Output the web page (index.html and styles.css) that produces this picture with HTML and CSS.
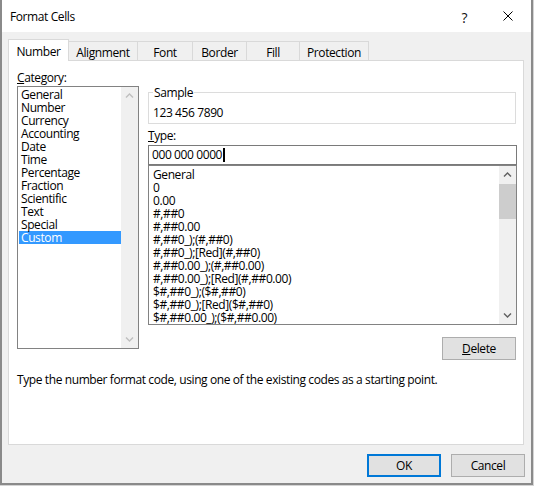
FILE: index.html
```html
<!DOCTYPE html>
<html lang="en">
<head>
<meta charset="utf-8">
<title>Format Cells</title>
<link rel="stylesheet" href="styles.css">
</head>
<body>
<div class="window">
  <div class="titlebar">
    <span class="title">Format Cells</span>
    <span class="ctrl help">?</span>
    <span class="ctrl close">
      <svg width="10" height="10" viewBox="0 0 10 10"><path d="M0.5 0.5 L9.5 9.5 M9.5 0.5 L0.5 9.5" stroke="#000" stroke-width="1" fill="none"/></svg>
    </span>
  </div>
  <div class="body">
    <div class="tabs">
      <div class="tab active w-number">Number</div>
      <div class="tab w-align">Alignment</div>
      <div class="tab w-font">Font</div>
      <div class="tab w-border">Border</div>
      <div class="tab w-fill">Fill</div>
      <div class="tab w-prot">Protection</div>
    </div>
    <div class="panel">
      <div class="cols">
        <div class="left">
          <div class="label"><u>C</u>ategory:</div>
          <div class="listbox cat">
            <ul class="items">
              <li>General</li>
              <li>Number</li>
              <li>Currency</li>
              <li>Accounting</li>
              <li>Date</li>
              <li>Time</li>
              <li>Percentage</li>
              <li>Fraction</li>
              <li>Scientific</li>
              <li>Text</li>
              <li>Special</li>
              <li class="sel">Custom</li>
            </ul>
            <div class="vscroll disabled">
              <div class="arrow"><svg width="9" height="5" viewBox="0 0 9 5"><polyline points="1,4.5 4.5,1 8,4.5" /></svg></div>
              <div class="track"></div>
              <div class="arrow"><svg width="9" height="5" viewBox="0 0 9 5"><polyline points="1,0.5 4.5,4 8,0.5" /></svg></div>
            </div>
          </div>
        </div>
        <div class="right">
          <fieldset class="sample">
            <legend>Sample</legend>
            <div class="sample-val">123 456 7890</div>
          </fieldset>
          <div class="label type-label"><u>T</u>ype:</div>
          <div class="typebox"><span>000 000 0000</span><span class="caret"></span></div>
          <div class="listbox codes">
            <ul class="items">
              <li>General</li>
              <li>0</li>
              <li>0.00</li>
              <li>#,##0</li>
              <li>#,##0.00</li>
              <li>#,##0_);(#,##0)</li>
              <li>#,##0_);[Red](#,##0)</li>
              <li>#,##0.00_);(#,##0.00)</li>
              <li>#,##0.00_);[Red](#,##0.00)</li>
              <li>$#,##0_);($#,##0)</li>
              <li>$#,##0_);[Red]($#,##0)</li>
              <li>$#,##0.00_);($#,##0.00)</li>
            </ul>
            <div class="vscroll">
              <div class="arrow"><svg width="9" height="5" viewBox="0 0 9 5"><polyline points="1,4.5 4.5,1 8,4.5" /></svg></div>
              <div class="track"><div class="thumb"></div></div>
              <div class="arrow"><svg width="9" height="5" viewBox="0 0 9 5"><polyline points="1,0.5 4.5,4 8,0.5" /></svg></div>
            </div>
          </div>
          <div class="btnrow"><button class="btn"><u>D</u>elete</button></div>
        </div>
      </div>
      <p class="hint">Type the number format code, using one of the existing codes as a starting point.</p>
    </div>
    <div class="footer">
      <button class="btn default">OK</button>
      <button class="btn">Cancel</button>
    </div>
  </div>
</div>
</body>
</html>
```

FILE: styles.css
```css
* { box-sizing: border-box; }
html, body { margin: 0; padding: 0; }
body {
  width: 534px;
  height: 486px;
  overflow: hidden;
  background: #d4d4d4;
  font-family: "Open Sans", "Noto Sans", sans-serif;
  font-size: 12px;
  letter-spacing: -0.4px;
  color: #000;
}
.window {
  width: 533px;
  height: 485px;
  background: #f0f0f0;
  border: 2px solid #8a8a8a;
  border-top: none;
  display: flex;
  flex-direction: column;
}
.titlebar {
  flex: none;
  height: 32px;
  padding-top: 2px;
  background: #fff;
  display: flex;
  align-items: center;
  padding-left: 8px;
}
.title { flex: 1; line-height: 16px; }
.ctrl {
  width: 46px;
  height: 30px;
  display: flex;
  align-items: center;
  justify-content: center;
}
.help { font-size: 14px; letter-spacing: 0; color: #111; padding-left: 5px; }
.close { padding-bottom: 2px; }
.body { flex: 1; padding: 7px 0 0 6px; }
.tabs { display: flex; align-items: flex-start; height: 21px; }
.tab {
  margin-top: 2px;
  margin-right: -1px;
  height: 19px;
  padding-top: 3px;
  line-height: 15px;
  text-align: center;
  background: #f0f0f0;
  border: 1px solid #d9d9d9;
  border-bottom: none;
}
.tab.active {
  margin-top: 0;
  height: 22px;
  padding-top: 4px;
  background: #fff;
  position: relative;
  z-index: 1;
}
.w-number { width: 61px; }
.w-align { width: 70px; }
.w-font { width: 56px; }
.w-border { width: 55px; }
.w-fill { width: 54px; }
.w-prot { width: 70px; }
.panel {
  width: 516px;
  height: 385px;
  background: #fff;
  border: 1px solid #d9d9d9;
  padding-left: 8px;
}
.cols { display: flex; gap: 9px; }
.left { width: 122px; padding-top: 9px; }
.label { line-height: 15px; }
.listbox {
  display: flex;
  background: #fff;
  border: 1px solid #828282;
}
.cat { height: 263px; margin-top: 1px; }
.items {
  flex: 1;
  min-width: 0;
  list-style: none;
  margin: 0;
  padding: 1px 0 0;
  line-height: 13px;
  white-space: nowrap;
  overflow: hidden;
}
.cat .items li { margin-left: 1px; padding-left: 2px; }
.sel { background: #3399ff; color: #fff; }
.codes { height: 160px; }
.codes .items { padding-top: 2px; }
.codes .items li { padding-left: 4px; }
.vscroll {
  flex: none;
  width: 17px;
  background: #f0f0f0;
  display: flex;
  flex-direction: column;
}
.arrow {
  height: 17px;
  display: flex;
  align-items: center;
  justify-content: center;
}
.arrow polyline { fill: none; stroke: #606060; stroke-width: 1.4; }
.disabled .arrow polyline { stroke: #bfbfbf; }
.track { flex: 1; }
.thumb { height: 35px; margin-top: 1px; background: #cdcdcd; }
.right { width: 369px; padding-top: 24px; }
.sample {
  margin: 0;
  min-width: 0;
  width: 368px;
  padding: 5px 4px 3px;
  border: 1px solid #dcdcdc;
}
.sample legend { padding: 0 1px; line-height: 15px; }
.sample-val { line-height: 15px; }
.type-label { margin: 4px 0 2px; }
.typebox {
  height: 20px;
  border: 1px solid #7a7a7a;
  padding-left: 3px;
  display: flex;
  align-items: center;
  line-height: 16px;
}
.caret { width: 2px; height: 14px; background: #000; margin-left: 1px; }
.btnrow { display: flex; justify-content: flex-end; margin-top: 12px; padding-right: 1px; }
.btn {
  width: 74px;
  height: 23px;
  padding: 0;
  background: #e1e1e1;
  border: 1px solid #adadad;
  font-family: inherit;
  font-size: 12px;
  letter-spacing: -0.4px;
  color: #000;
  line-height: 15px;
}
.btn.default { border: 2px solid #0078d7; }
.hint { margin: 12px 0 0; line-height: 15px; }
.footer {
  display: flex;
  justify-content: flex-end;
  gap: 10px;
  padding: 9px 6px 0 0;
}
```
